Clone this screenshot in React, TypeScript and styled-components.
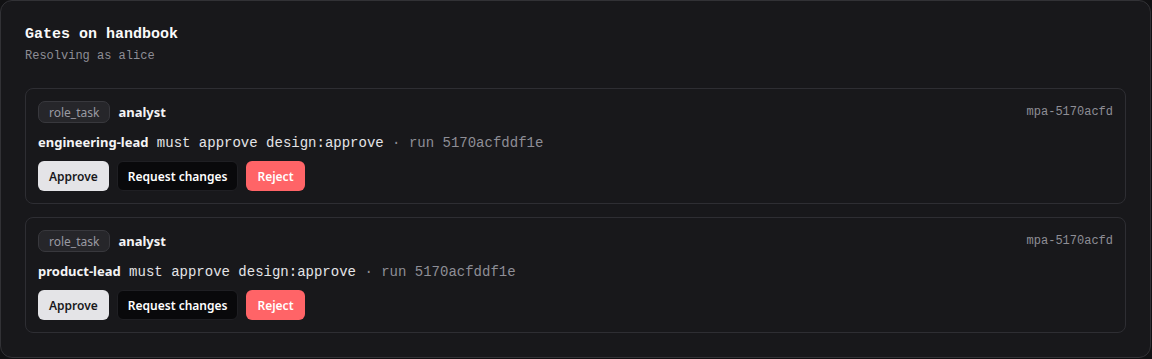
import React from "react";
import styled, { createGlobalStyle } from "styled-components";

const Global = createGlobalStyle`
  html, body { margin: 0; padding: 0; background: #111113; }
  * { box-sizing: border-box; }
`;

const SANS = `"Noto Sans", sans-serif`;
const MONO = `"Liberation Mono", monospace`;

const Panel = styled.section`
  width: 1151px;
  height: 358px;
  background: #18181b;
  border: 1px solid #323236;
  border-radius: 12px;
  padding: 24px;
  display: flex;
  flex-direction: column;
`;

const Header = styled.header`
  display: flex;
  flex-direction: column;
  gap: 4px;
  margin-bottom: 24px;
`;

const Title = styled.h2`
  margin: 0;
  font-family: ${MONO};
  font-weight: 700;
  font-size: 15px;
  line-height: 19px;
  color: #fafafa;
`;

const Subtitle = styled.div`
  font-family: ${MONO};
  font-size: 12px;
  line-height: 16px;
  color: #8e8e96;
`;

const List = styled.div`
  display: flex;
  flex-direction: column;
  gap: 13px;
`;

const Card = styled.div`
  border: 1px solid #2e2e33;
  border-radius: 8px;
  padding: 12px;
  display: flex;
  flex-direction: column;
  gap: 8px;
`;

const TopRow = styled.div`
  display: flex;
  align-items: center;
  gap: 8px;
  height: 22px;
`;

const Badge = styled.span`
  display: inline-flex;
  align-items: center;
  height: 22px;
  padding: 0 10px;
  border: 1px solid #38383d;
  background: #26262a;
  border-radius: 7px;
  font-family: ${SANS};
  font-size: 12px;
  color: #9a9aa2;
`;

const Role = styled.span`
  font-family: ${SANS};
  font-weight: 700;
  font-size: 13px;
  color: #f4f4f5;
`;

const Id = styled.span`
  margin-left: auto;
  font-family: ${MONO};
  font-size: 12px;
  color: #8e8e96;
`;

const Line = styled.div`
  height: 22px;
  line-height: 22px;
  font-family: ${MONO};
  font-size: 14px;
  color: #e4e4e7;
  white-space: pre;
`;

const Actor = styled.span`
  font-family: ${SANS};
  font-weight: 700;
  font-size: 13px;
  color: #f4f4f5;
`;

const Muted = styled.span`
  color: #8e8e96;
`;

const Actions = styled.div`
  display: flex;
  gap: 8px;
`;

const Button = styled.button<{ $variant: "light" | "dark" | "danger" }>`
  height: 30px;
  padding: 0 10px;
  border-radius: 6px;
  font-family: ${SANS};
  font-weight: 600;
  font-size: 12px;
  cursor: pointer;
  border: 1px solid
    ${(p) => (p.$variant === "dark" ? "#1f1f23" : "transparent")};
  background: ${(p) =>
    p.$variant === "light" ? "#e4e4e7" : p.$variant === "dark" ? "#09090b" : "#ff6467"};
  color: ${(p) => (p.$variant === "light" ? "#18181b" : "#ffffff")};
`;

const gates = [
  { actor: "engineering-lead" },
  { actor: "product-lead" },
];

export default function App() {
  return (
    <>
      <Global />
      <Panel>
        <Header>
          <Title>Gates on handbook</Title>
          <Subtitle>Resolving as alice</Subtitle>
        </Header>
        <List>
          {gates.map((g) => (
            <Card key={g.actor}>
              <TopRow>
                <Badge>role_task</Badge>
                <Role>analyst</Role>
                <Id>mpa-5170acfd</Id>
              </TopRow>
              <Line>
                <Actor>{g.actor}</Actor> must approve design:approve{" "}
                <Muted>· run 5170acfddf1e</Muted>
              </Line>
              <Actions>
                <Button $variant="light">Approve</Button>
                <Button $variant="dark">Request changes</Button>
                <Button $variant="danger">Reject</Button>
              </Actions>
            </Card>
          ))}
        </List>
      </Panel>
    </>
  );
}
